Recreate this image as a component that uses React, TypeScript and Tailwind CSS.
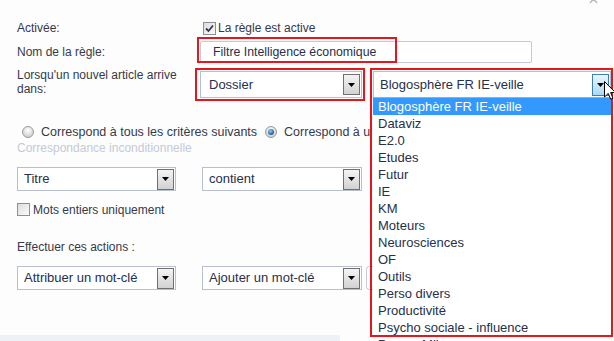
import React from "react";

function ArrowBtn({ hover }: { hover?: boolean }) {
  return (
    <div
      className={
        hover
          ? "w-[17px] h-[22px] border border-[#3c7fb1] bg-gradient-to-b from-[#eaf6fd] to-[#a9d9f5] flex items-center justify-center shrink-0"
          : "w-[17px] h-[21px] border border-[#707070] bg-gradient-to-b from-[#f4f4f4] to-[#d2d2d2] flex items-center justify-center shrink-0"
      }
    >
      <svg width="7" height="4" viewBox="0 0 7 4">
        <path d="M0 0H7L3.5 4Z" fill="#000" />
      </svg>
    </div>
  );
}

function Select({ className, text, hover }: { className: string; text: string; hover?: boolean }) {
  return (
    <div className={"flex items-center justify-between border border-[#b9c0cd] bg-white pl-[6px] pr-[1px] text-[13px] text-[#26304a] " + className}>
      <span className="whitespace-nowrap">{text}</span>
      <ArrowBtn hover={hover} />
    </div>
  );
}

function CheckBox({ checked }: { checked?: boolean }) {
  return (
    <div className="w-[13px] h-[13px] border border-[#8f8f8f] bg-gradient-to-br from-[#dcdcdc] to-[#fbfbfb] flex items-center justify-center shrink-0">
      {checked && (
        <svg width="9" height="9" viewBox="0 0 9 9">
          <path d="M1 4.5L3.5 7L8 1.5" stroke="#2b3a5a" strokeWidth="1.8" fill="none" />
        </svg>
      )}
    </div>
  );
}

function Radio({ checked }: { checked?: boolean }) {
  return (
    <svg width="12" height="12" viewBox="0 0 12 12" className="shrink-0">
      <defs>
        <radialGradient id={checked ? "rgc" : "rgu"} cx="50%" cy="35%" r="60%">
          <stop offset="0%" stopColor="#ffffff" />
          <stop offset="100%" stopColor="#cfcfcf" />
        </radialGradient>
        <radialGradient id="dot" cx="40%" cy="35%" r="70%">
          <stop offset="0%" stopColor="#8ad0ff" />
          <stop offset="100%" stopColor="#0b4e8a" />
        </radialGradient>
      </defs>
      <circle cx="6" cy="6" r="5.5" fill={checked ? "url(#rgc)" : "url(#rgu)"} stroke="#9a9a9a" />
      {checked && <circle cx="6" cy="6" r="3" fill="url(#dot)" />}
    </svg>
  );
}

const items = [
  "Blogosphère FR IE-veille",
  "Dataviz",
  "E2.0",
  "Etudes",
  "Futur",
  "IE",
  "KM",
  "Moteurs",
  "Neurosciences",
  "OF",
  "Outils",
  "Perso divers",
  "Productivité",
  "Psycho sociale - influence",
  "Presse Mil",
];

export default function App() {
  return (
    <div className="relative w-[614px] h-[341px] overflow-hidden bg-[#fdfdfd] font-['Liberation_Sans',Arial,sans-serif] text-[12px] text-[#353a48]">
      <div className="flex flex-col h-full">
        <div className="flex-1 pl-[17px] pt-[20px]">
          {/* Row 1 */}
          <div className="flex items-center h-[16px]">
            <div className="w-[183px]">Activée:</div>
            <div className="ml-[3px] flex items-center">
              <CheckBox checked />
              <span className="ml-[2px]">La règle est active</span>
            </div>
          </div>
          {/* Row 2 */}
          <div className="flex items-center mt-[5px] h-[22px]">
            <div className="w-[183px]">Nom de la règle:</div>
            <div className="w-[332px] h-[22px] border border-[#c5cad6] rounded-[2px] bg-white flex items-center pl-[12px] text-[12.3px] text-[#26304a]">
              Filtre Intelligence économique
            </div>
          </div>
          {/* Row 3 */}
          <div className="flex items-start mt-[5px]">
            <div className="w-[183px] leading-[14px]">
              Lorsqu'un nouvel article arrive
              <br />
              dans:
            </div>
            <Select className="mt-[3px] w-[162px] h-[27px] pl-[8px]" text="Dossier" />
            <Select className="mt-[3px] ml-[11px] w-[238px] h-[27px]" text="Blogosphère FR IE-veille" hover />
          </div>
          {/* Radios */}
          <div className="flex items-center mt-[27px] h-[14px] w-[354px] overflow-hidden whitespace-nowrap text-[12.5px]">
            <div className="ml-[5px]"><Radio /></div>
            <span className="ml-[7px]">Correspond à tous les critères suivants</span>
            <div className="ml-[8px]"><Radio checked /></div>
            <span className="ml-[7px]">Correspond à un des critères suivants</span>
          </div>
          <div className="mt-[2px] leading-[14px] text-[#c4cad7]">Correspondance inconditionnelle</div>
          {/* Criteria */}
          <div className="flex items-center mt-[12px]">
            <Select className="w-[159px] h-[24px]" text="Titre" />
            <Select className="ml-[26px] w-[160px] h-[24px]" text="contient" />
          </div>
          <div className="flex items-center mt-[12px] h-[13px]">
            <CheckBox />
            <span className="ml-[3px]">Mots entiers uniquement</span>
          </div>
          <div className="mt-[24px] leading-[14px]">Effectuer ces actions :</div>
          <div className="flex items-center mt-[12px]">
            <Select className="w-[159px] h-[24px]" text="Attribuer un mot-clé" />
            <Select className="ml-[26px] w-[160px] h-[24px]" text="Ajouter un mot-clé" />
            <div className="ml-[4px] w-[120px] h-[24px] border border-[#c5cad6] rounded-[3px] bg-white" />
          </div>
        </div>
        <div className="h-[6px] w-[340px] bg-[#eef2f7]" />
      </div>

      {/* close x at top */}
      <svg className="absolute left-[589px] top-[-5px]" width="10" height="9" viewBox="0 0 10 9">
        <path d="M1 0L8 8M8 0L1 8" stroke="#b5b9c2" strokeWidth="1.5" />
      </svg>

      {/* Dropdown list */}
      <div className="absolute left-[373px] top-[97px] w-[238px] h-[250px] bg-white border-t border-[#a9a9a9] overflow-hidden text-[13px] text-[#26304a]">
        {items.map((it, i) => (
          <div
            key={it}
            className={
              i === 0
                ? "h-[17px] leading-[17px] pl-[5px] bg-[#3399ff] text-white whitespace-nowrap"
                : "h-[17px] leading-[17px] pl-[5px] whitespace-nowrap"
            }
          >
            {it}
          </div>
        ))}
      </div>

      {/* Red annotation boxes */}
      <div className="absolute left-[197px] top-[37px] w-[200px] h-[26px] border-2 border-[#e4161f]" />
      <div className="absolute left-[195px] top-[68px] w-[170px] h-[33px] border-2 border-[#e4161f]" />
      <div className="absolute left-[370px] top-[68px] w-[243px] h-[269px] border-2 border-[#e4161f]" />

      {/* Mouse cursor */}
      <svg className="absolute left-[604px] top-[81px]" width="12" height="19" viewBox="0 0 12 19">
        <path d="M0.5 0.5V16L4.2 12.4L6.7 18.2L9 17.2L6.6 11.6H11.5Z" fill="#fff" stroke="#000" strokeWidth="1" />
      </svg>
    </div>
  );
}
